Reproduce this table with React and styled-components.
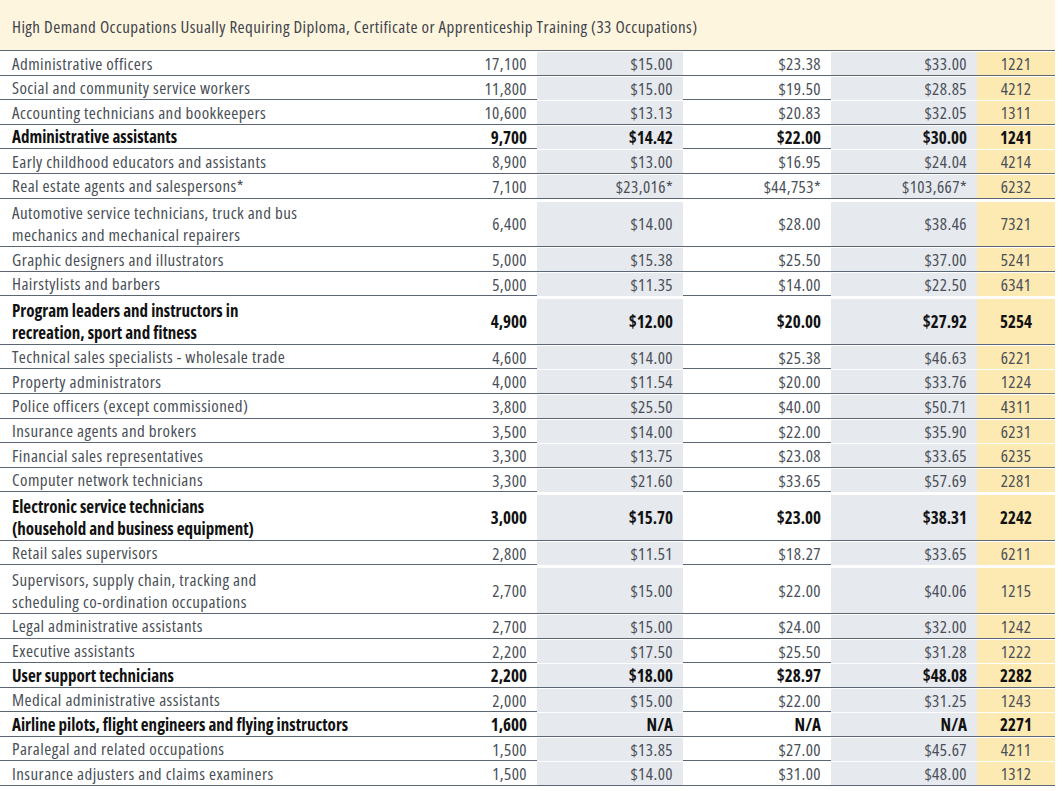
import styled, { createGlobalStyle } from 'styled-components'

const GlobalStyle = createGlobalStyle`
  body {
    margin: 0;
    background: #ffffff;
    font-family: "Open Sans", "DejaVu Sans", sans-serif;
    font-stretch: condensed;
  }
`

const Table = styled.div`
  width: 1055px;
  font-size: 17px;
  letter-spacing: 0.44px;
  color: #4a4f57;
`

const Caption = styled.div`
  height: 51px;
  display: flex;
  align-items: center;
  padding: 2px 0 0 12px;
  box-sizing: border-box;
  background: #fdf5de;
  border-bottom: 1px solid #5d6674;
  color: #3f444c;
`

const Row = styled.div`
  display: grid;
  grid-template-columns: 400px 137px 146px 148px 146px 78px;
  height: ${(p) => (p.$tall ? '48.5px' : '24.6px')};
  padding-top: ${(p) => (p.$tall ? '3px' : '1px')};
  border-bottom: 1px solid #5d6674;
  box-sizing: border-box;
  font-weight: ${(p) => (p.$bold ? 700 : 400)};
  letter-spacing: ${(p) => (p.$bold ? '0' : '0.44px')};
  color: ${(p) => (p.$bold ? '#111111' : '#4a4f57')};
`

const Name = styled.div`
  display: flex;
  align-items: center;
  padding-left: 12px;
  line-height: 22px;
  white-space: pre;
`

const Num = styled.div`
  display: flex;
  align-items: center;
  justify-content: flex-end;
  padding-right: 10px;
  white-space: nowrap;
  background: ${(p) => (p.$shade ? '#e6e9ee' : 'transparent')};
`

const Code = styled.div`
  display: flex;
  align-items: center;
  justify-content: center;
  background: #fde9b2;
`

const rows = [
  ['Administrative officers', '17,100', '$15.00', '$23.38', '$33.00', '1221'],
  ['Social and community service workers', '11,800', '$15.00', '$19.50', '$28.85', '4212'],
  ['Accounting technicians and bookkeepers', '10,600', '$13.13', '$20.83', '$32.05', '1311'],
  ['Administrative assistants', '9,700', '$14.42', '$22.00', '$30.00', '1241', true],
  ['Early childhood educators and assistants', '8,900', '$13.00', '$16.95', '$24.04', '4214'],
  ['Real estate agents and salespersons*', '7,100', '$23,016*', '$44,753*', '$103,667*', '6232'],
  ['Automotive service technicians, truck and bus\nmechanics and mechanical repairers', '6,400', '$14.00', '$28.00', '$38.46', '7321'],
  ['Graphic designers and illustrators', '5,000', '$15.38', '$25.50', '$37.00', '5241'],
  ['Hairstylists and barbers', '5,000', '$11.35', '$14.00', '$22.50', '6341'],
  ['Program leaders and instructors in\nrecreation, sport and fitness', '4,900', '$12.00', '$20.00', '$27.92', '5254', true],
  ['Technical sales specialists - wholesale trade', '4,600', '$14.00', '$25.38', '$46.63', '6221'],
  ['Property administrators', '4,000', '$11.54', '$20.00', '$33.76', '1224'],
  ['Police officers (except commissioned)', '3,800', '$25.50', '$40.00', '$50.71', '4311'],
  ['Insurance agents and brokers', '3,500', '$14.00', '$22.00', '$35.90', '6231'],
  ['Financial sales representatives', '3,300', '$13.75', '$23.08', '$33.65', '6235'],
  ['Computer network technicians', '3,300', '$21.60', '$33.65', '$57.69', '2281'],
  ['Electronic service technicians\n(household and business equipment)', '3,000', '$15.70', '$23.00', '$38.31', '2242', true],
  ['Retail sales supervisors', '2,800', '$11.51', '$18.27', '$33.65', '6211'],
  ['Supervisors, supply chain, tracking and\nscheduling co-ordination occupations', '2,700', '$15.00', '$22.00', '$40.06', '1215'],
  ['Legal administrative assistants', '2,700', '$15.00', '$24.00', '$32.00', '1242'],
  ['Executive assistants', '2,200', '$17.50', '$25.50', '$31.28', '1222'],
  ['User support technicians', '2,200', '$18.00', '$28.97', '$48.08', '2282', true],
  ['Medical administrative assistants', '2,000', '$15.00', '$22.00', '$31.25', '1243'],
  ['Airline pilots, flight engineers and flying instructors', '1,600', 'N/A', 'N/A', 'N/A', '2271', true],
  ['Paralegal and related occupations', '1,500', '$13.85', '$27.00', '$45.67', '4211'],
  ['Insurance adjusters and claims examiners', '1,500', '$14.00', '$31.00', '$48.00', '1312'],
]

export default function App() {
  return (
    <>
      <GlobalStyle />
      <Table>
        <Caption>High Demand Occupations Usually Requiring Diploma, Certificate or Apprenticeship Training (33 Occupations)</Caption>
        {rows.map(([name, count, low, mid, high, code, bold]) => (
          <Row key={name} $bold={bold} $tall={name.includes('\n')}>
            <Name>{name}</Name>
            <Num>{count}</Num>
            <Num $shade>{low}</Num>
            <Num>{mid}</Num>
            <Num $shade>{high}</Num>
            <Code>{code}</Code>
          </Row>
        ))}
      </Table>
    </>
  )
}
